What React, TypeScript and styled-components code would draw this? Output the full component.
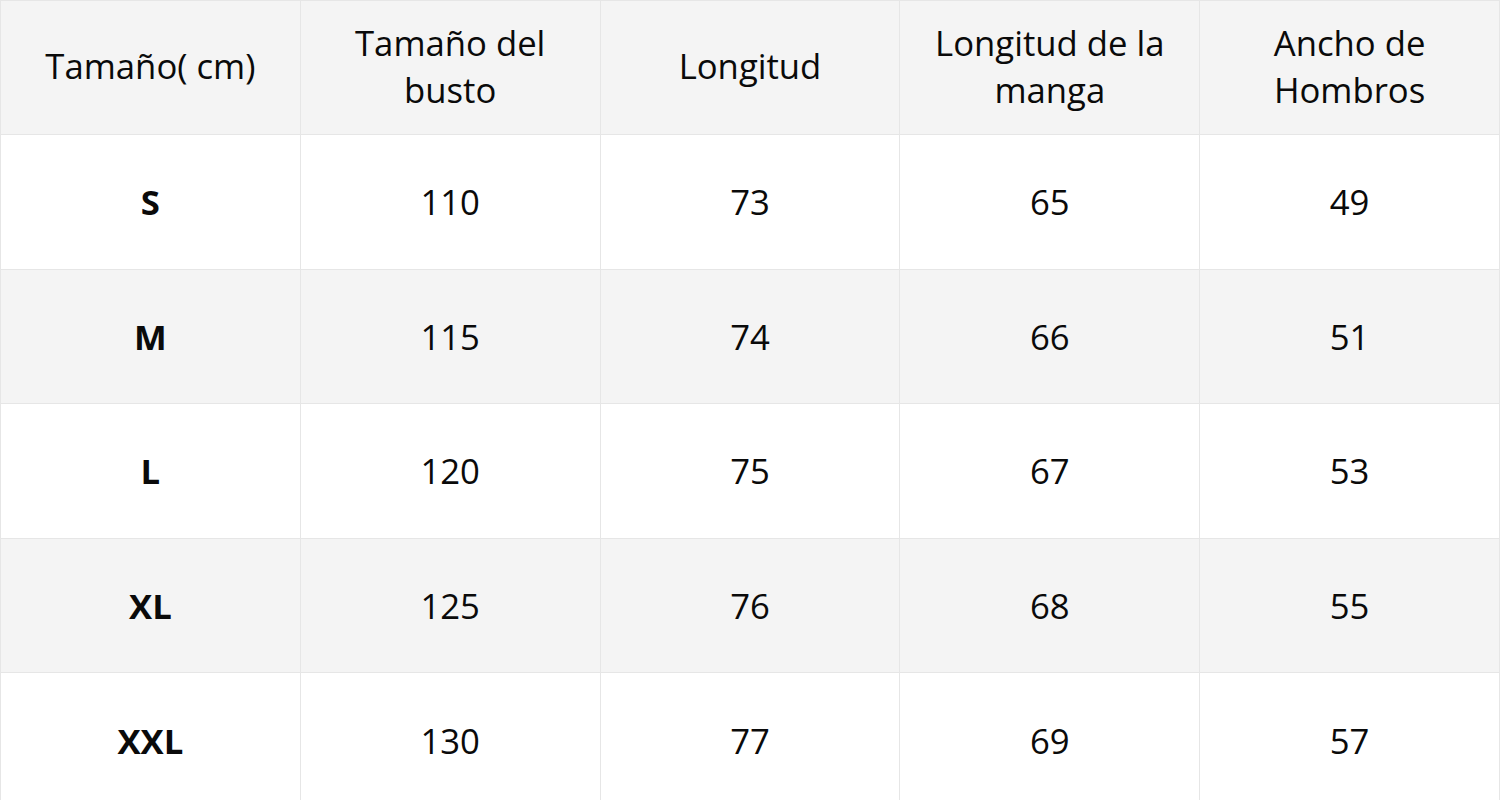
import React from "react";
import styled, { createGlobalStyle } from "styled-components";

const GlobalStyle = createGlobalStyle`
  html, body {
    margin: 0;
    padding: 0;
    background: #ffffff;
  }
  body {
    font-family: "Open Sans", "Liberation Sans", sans-serif;
    color: #0a0a0a;
  }
`;

const headers = [
  "Tamaño( cm)",
  "Tamaño del busto",
  "Longitud",
  "Longitud de la manga",
  "Ancho de Hombros",
];

const rows: [string, number, number, number, number][] = [
  ["S", 110, 73, 65, 49],
  ["M", 115, 74, 66, 51],
  ["L", 120, 75, 67, 53],
  ["XL", 125, 76, 68, 55],
  ["XXL", 130, 77, 69, 57],
];

const App: React.FC = () => {
  return (
    <>
      <GlobalStyle />
      <SizeTable>
        <colgroup>
          {headers.map((h) => (
            <col key={h} style={{ width: "20%" }} />
          ))}
        </colgroup>
        <thead>
          <HeadRow>
            {headers.map((h) => (
              <HeadCell key={h}>{h}</HeadCell>
            ))}
          </HeadRow>
        </thead>
        <tbody>
          {rows.map((r, i) => (
            <BodyRow key={r[0]} $striped={i % 2 === 1}>
              {r.map((v, j) => (
                <Cell key={j} $bold={j === 0}>
                  {v}
                </Cell>
              ))}
            </BodyRow>
          ))}
        </tbody>
      </SizeTable>
    </>
  );
};

export default App;

const SizeTable = styled.table`
  width: 1500px;
  border-collapse: collapse;
  table-layout: fixed;
  font-size: 34.7px;
  line-height: 47px;
`;

const HeadRow = styled.tr`
  height: 134px;
  background: #f4f4f4;
`;

const HeadCell = styled.th`
  border: 1px solid #e6e6e6;
  font-weight: 400;
  text-align: center;
  vertical-align: middle;
  padding: 0 20px 4px;
`;

const BodyRow = styled.tr<{ $striped: boolean }>`
  height: 134.6px;
  background: ${(p) => (p.$striped ? "#f4f4f4" : "#ffffff")};
`;

const Cell = styled.td<{ $bold: boolean }>`
  border: 1px solid #e6e6e6;
  text-align: center;
  vertical-align: middle;
  padding: 0;
  font-weight: ${(p) => (p.$bold ? 700 : 400)};
`;
